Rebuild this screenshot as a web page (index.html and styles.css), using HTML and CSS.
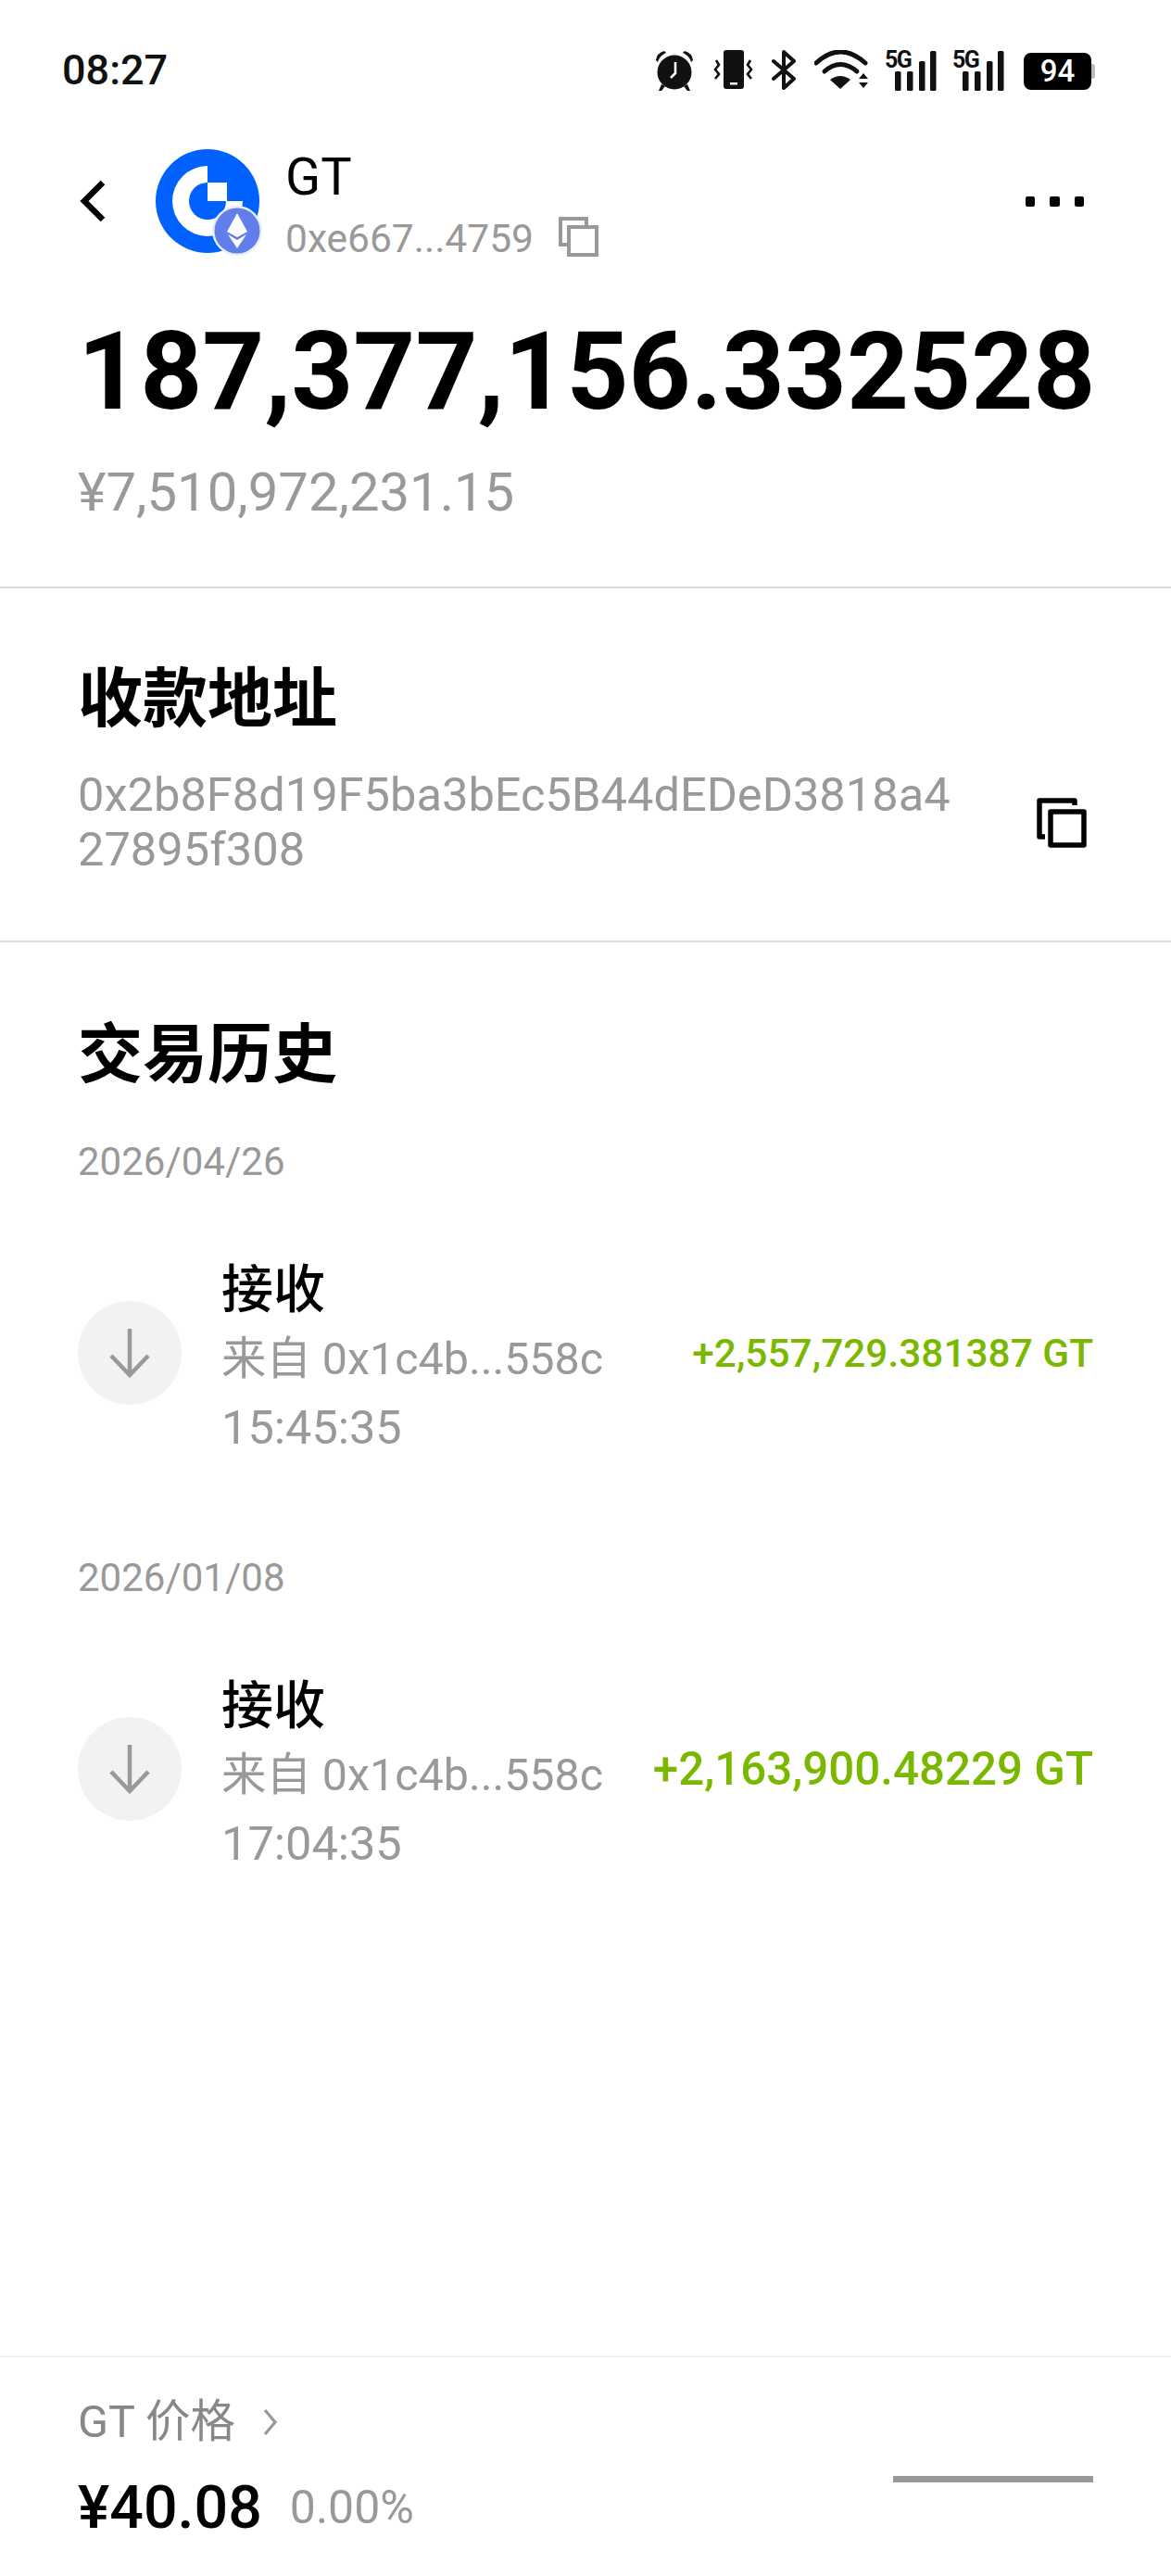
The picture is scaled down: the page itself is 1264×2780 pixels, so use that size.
FILE: index.html
```html
<!DOCTYPE html>
<html lang="zh">
<head>
    <meta charset="UTF-8">
    <title>GT</title>
    <link rel="stylesheet" href="styles.css">
</head>
<body>
<div class="screen">

    <!-- status bar -->
    <div class="status">
        <span class="time">08:27</span>
        <div class="status-icons">
            <svg class="ic-alarm" width="42" height="44" viewBox="0 0 42 44">
                <circle cx="21" cy="24" r="18.5" fill="#111"/>
                <path d="M1 11 Q2 3 10 1 L12 3 Q5 6 3 13 Z M41 11 Q40 3 32 1 L30 3 Q37 6 39 13 Z" fill="#111"/>
                <path d="M7 37 L4 44 H7 L11 39 Z M35 37 L38 44 H35 L31 39 Z" fill="#111"/>
                <path d="M22 13 V25 L17 30" fill="none" stroke="#fff" stroke-width="2.6"/>
            </svg>
            <svg class="ic-vibrate" width="43" height="42" viewBox="0 0 43 42">
                <rect x="11" y="0" width="22" height="42" rx="3" fill="#111"/>
                <rect x="18" y="35" width="8" height="2.5" fill="#fff"/>
                <path d="M3 11 L6 16 L2 21 L6 26 L2 31 M40 11 L37 16 L41 21 L37 26 L41 31" fill="none" stroke="#111" stroke-width="2.6"/>
            </svg>
            <svg class="ic-bt" width="27" height="43" viewBox="0 0 27 43">
                <path d="M2 12 L24 31 L13 41 V2 L24 12 L2 31" fill="none" stroke="#111" stroke-width="4" stroke-linejoin="round" stroke-linecap="round"/>
            </svg>
            <svg class="ic-wifi" width="59" height="43" viewBox="0 0 59 43">
                <path d="M2 14 Q28 -10 55 14" fill="none" stroke="#111" stroke-width="5" stroke-linecap="round"/>
                <path d="M11 23 Q28 8 46 23" fill="none" stroke="#111" stroke-width="5" stroke-linecap="round"/>
                <path d="M28 42 L17 32 Q28 24 39 32 Z" fill="#111"/>
                <path d="M48 31 L53 25 L58 31 Z M48 35 L58 35 L53 41 Z" fill="#111"/>
            </svg>
            <svg class="ic-signal" width="56" height="44" viewBox="0 0 56 44">
                <text x="0" y="19" class="net-label">5G</text>
                <rect x="11" y="23" width="6.5" height="21" rx="1.5" fill="#111"/>
                <rect x="24" y="23" width="6.5" height="21" rx="1.5" fill="#111"/>
                <rect x="37" y="12" width="6.5" height="32" rx="1.5" fill="#111"/>
                <rect x="49" y="1" width="6.5" height="43" rx="1.5" fill="#111"/>
            </svg>
            <svg class="ic-signal" width="56" height="44" viewBox="0 0 56 44">
                <text x="0" y="19" class="net-label">5G</text>
                <rect x="11" y="23" width="6.5" height="21" rx="1.5" fill="#111"/>
                <rect x="24" y="23" width="6.5" height="21" rx="1.5" fill="#111"/>
                <rect x="37" y="12" width="6.5" height="32" rx="1.5" fill="#111"/>
                <rect x="49" y="1" width="6.5" height="43" rx="1.5" fill="#111"/>
            </svg>
            <div class="battery">
                <span class="battery-body">94</span>
                <span class="battery-tip"></span>
            </div>
        </div>
    </div>

    <!-- token header -->
    <div class="token-head">
        <svg class="back" width="30" height="46" viewBox="0 0 30 46">
            <path d="M25 3 L5 23 L25 43" fill="none" stroke="#000" stroke-width="6.5" stroke-linejoin="miter"/>
        </svg>
        <svg class="token-logo" width="118" height="118" viewBox="0 0 118 118">
            <circle cx="56" cy="56" r="56" fill="#0061ff"/>
            <path d="M56 18 A38 38 0 1 0 94 56 H76 A20 20 0 1 1 56 36 Z" fill="#fff"/>
            <rect x="56" y="36" width="21" height="20" fill="#fff"/>
            <circle cx="88" cy="88" r="27" fill="#e9eefc"/>
            <circle cx="88" cy="88" r="24.5" fill="#627eea"/>
            <path d="M88 69 L99 89 L88 95 L77 89 Z" fill="#fff"/>
            <path d="M78 92 L88 98 L98 92 L88 107 Z" fill="#fff"/>
        </svg>
        <div class="token-info">
            <div class="token-name">GT</div>
            <div class="token-addr">
                <span>0xe667...4759</span>
                <svg class="copy-small" width="43" height="43" viewBox="0 0 43 43">
                    <path d="M30 9 V2 H2 V30 H10" fill="none" stroke="#999" stroke-width="4"/>
                    <rect x="11" y="11" width="30" height="30" fill="none" stroke="#999" stroke-width="4"/>
                </svg>
            </div>
        </div>
        <div class="more">
            <i></i><i></i><i></i>
        </div>
    </div>

    <div class="balance">
        <div class="amount">187,377,156.332528</div>
        <div class="fiat">¥7,510,972,231.15</div>
    </div>

    <section class="block block-address">
        <h2>收款地址</h2>
        <div class="address-row">
            <p>0x2b8F8d19F5ba3bEc5B44dEDeD3818a427895f308</p>
            <svg class="copy-big" width="54" height="54" viewBox="0 0 54 54">
                <path d="M41 8 V3 H3 V42 H9" fill="none" stroke="#000" stroke-width="5.5" stroke-linejoin="round"/>
                <rect x="15" y="15" width="36" height="36" fill="none" stroke="#000" stroke-width="5.5" stroke-linejoin="round"/>
            </svg>
        </div>
    </section>

    <section class="block block-history">
        <h2>交易历史</h2>

        <div class="tx-date">2026/04/26</div>
        <div class="tx">
            <div class="tx-icon">
                <svg width="46" height="56" viewBox="0 0 46 56">
                    <path d="M23 2 V52 M3 31 L23 52 L43 31" fill="none" stroke="#999" stroke-width="4.5"/>
                </svg>
            </div>
            <div class="tx-text">
                <div class="tx-title">接收</div>
                <div class="tx-sub">来自 0x1c4b...558c</div>
                <div class="tx-time">15:45:35</div>
            </div>
            <div class="tx-amount small">+2,557,729.381387 GT</div>
        </div>

        <div class="tx-date">2026/01/08</div>
        <div class="tx">
            <div class="tx-icon">
                <svg width="46" height="56" viewBox="0 0 46 56">
                    <path d="M23 2 V52 M3 31 L23 52 L43 31" fill="none" stroke="#999" stroke-width="4.5"/>
                </svg>
            </div>
            <div class="tx-text">
                <div class="tx-title">接收</div>
                <div class="tx-sub">来自 0x1c4b...558c</div>
                <div class="tx-time">17:04:35</div>
            </div>
            <div class="tx-amount">+2,163,900.48229 GT</div>
        </div>
    </section>

    <!-- price bar -->
    <div class="price-bar">
        <div class="price-left">
            <div class="price-label">
                <span>GT 价格</span>
                <svg width="20" height="32" viewBox="0 0 20 32">
                    <path d="M4 3 L15 16 L4 29" fill="none" stroke="#999" stroke-width="3.2"/>
                </svg>
            </div>
            <div class="price-values">
                <span class="price">¥40.08</span>
                <span class="change">0.00%</span>
            </div>
        </div>
        <div class="sparkline"></div>
    </div>

</div>
</body>
</html>
```
FILE: styles.css
```css
* {
    box-sizing: border-box;
    margin: 0;
    padding: 0;
}

body {
    font-family: Roboto, "Noto Sans CJK SC", sans-serif;
    background-color: #fff;
    color: #000;
}

.screen {
    width: 1264px;
    height: 2780px;
    display: flex;
    flex-direction: column;
    overflow: hidden;
}

/* Status bar */
.status {
    height: 161px;
    padding: 54px 82px 0 67px;
    display: flex;
    justify-content: space-between;
    align-items: flex-start;
}

.time {
    font-size: 45px;
    font-weight: 500;
    line-height: 44px;
    color: #111;
}

.status-icons {
    display: flex;
    align-items: flex-start;
}

.ic-alarm { margin-right: 21px; }
.ic-vibrate { margin-right: 20px; }
.ic-bt { margin-right: 19px; }
.ic-wifi { margin-right: 17px; }
.ic-signal { margin-right: 17px; overflow: visible; }
.ic-signal + .battery { margin-left: 4px; }

.net-label {
    font-family: Roboto, sans-serif;
    font-size: 25px;
    font-weight: 700;
    fill: #111;
    letter-spacing: -1.5px;
}

.battery {
    display: flex;
    align-items: center;
    margin-top: 3px;
}

.battery-body {
    width: 73px;
    height: 40px;
    background-color: #000;
    border-radius: 8px;
    color: #fff;
    font-size: 33px;
    font-weight: 500;
    line-height: 40px;
    text-align: center;
}

.battery-tip {
    width: 4px;
    height: 16px;
    background-color: #bbb;
    border-radius: 0 3px 3px 0;
}

/* Token header */
.token-head {
    height: 118px;
    padding: 0 94px 0 86px;
    display: flex;
    align-items: flex-start;
}

.back {
    margin-top: 33px;
    margin-right: 52px;
}

.token-logo {
    margin-right: 22px;
}

.token-info {
    flex: 1;
}

.token-name {
    font-size: 56px;
    line-height: 56px;
    margin-top: 2px;
}

.token-addr {
    display: flex;
    align-items: center;
    margin-top: 13px;
    font-size: 42.5px;
    line-height: 52px;
    color: #999;
}

.copy-small {
    margin-left: 27px;
    margin-top: -6px;
}

.more {
    display: flex;
    gap: 16px;
    margin-top: 51px;
}

.more i {
    width: 10.5px;
    height: 11px;
    background-color: #000;
    border-radius: 2px;
}

/* Balance */
.balance {
    height: 356px;
    padding: 62px 84px 0;
    border-bottom: 2px solid #ddd;
}

.amount {
    font-size: 117px;
    font-weight: 700;
    line-height: 120px;
    white-space: nowrap;
}

.fiat {
    margin-top: 38px;
    font-size: 58px;
    line-height: 64px;
    color: #999;
}

/* Sections */
.block {
    padding: 0 84px;
}

.block h2 {
    font-size: 70px;
    font-weight: 700;
    line-height: 80px;
}

.block-address {
    height: 382px;
    padding-top: 80px;
    padding-bottom: 0;
    border-bottom: 2px solid #ddd;
}

.address-row {
    display: flex;
    align-items: center;
    justify-content: space-between;
    margin-top: 34px;
    padding-right: 7px;
}

.address-row p {
    width: 960px;
    font-size: 50.6px;
    line-height: 58.5px;
    color: #999;
    word-break: break-all;
}

.copy-big {
    margin-top: 0;
}

.block-history {
    padding-top: 82px;
    flex: 1;
}

.tx-date {
    margin-top: 50px;
    font-size: 42px;
    line-height: 50px;
    color: #999;
}

.tx + .tx-date {
    margin-top: 93px;
}

.tx {
    display: flex;
    align-items: center;
    margin-top: 56px;
    height: 250px;
}

.tx-icon {
    width: 112px;
    height: 112px;
    border-radius: 50%;
    background-color: #f2f2f2;
    display: flex;
    align-items: center;
    justify-content: center;
    margin-right: 43px;
}

.tx-text {
    flex: 1;
    padding-top: 10px;
}

.tx-title {
    font-size: 56px;
    font-weight: 500;
    line-height: 76px;
}

.tx-sub {
    font-size: 48.4px;
    line-height: 74px;
    color: #999;
}

.tx-time {
    font-size: 50.5px;
    line-height: 73px;
    color: #999;
}

.tx-amount {
    font-size: 49.3px;
    font-weight: 500;
    color: #7ab800;
    white-space: nowrap;
}

.tx-amount.small {
    font-size: 42.4px;
}

/* Price bar */
.price-bar {
    height: 238px;
    padding: 40px 84px 0;
    border-top: 2px solid #f2f2f2;
    display: flex;
    justify-content: space-between;
}

.price-label {
    display: flex;
    align-items: center;
    gap: 28px;
    font-size: 48.5px;
    line-height: 60px;
    color: #888;
}

.price-values {
    display: flex;
    align-items: center;
    gap: 30px;
    margin-top: 24px;
}

.price {
    font-size: 64.5px;
    font-weight: 500;
}

.change {
    font-size: 50px;
    color: #999;
}

.sparkline {
    width: 216px;
    height: 7px;
    margin-top: 88px;
    background-color: #999;
}
```
